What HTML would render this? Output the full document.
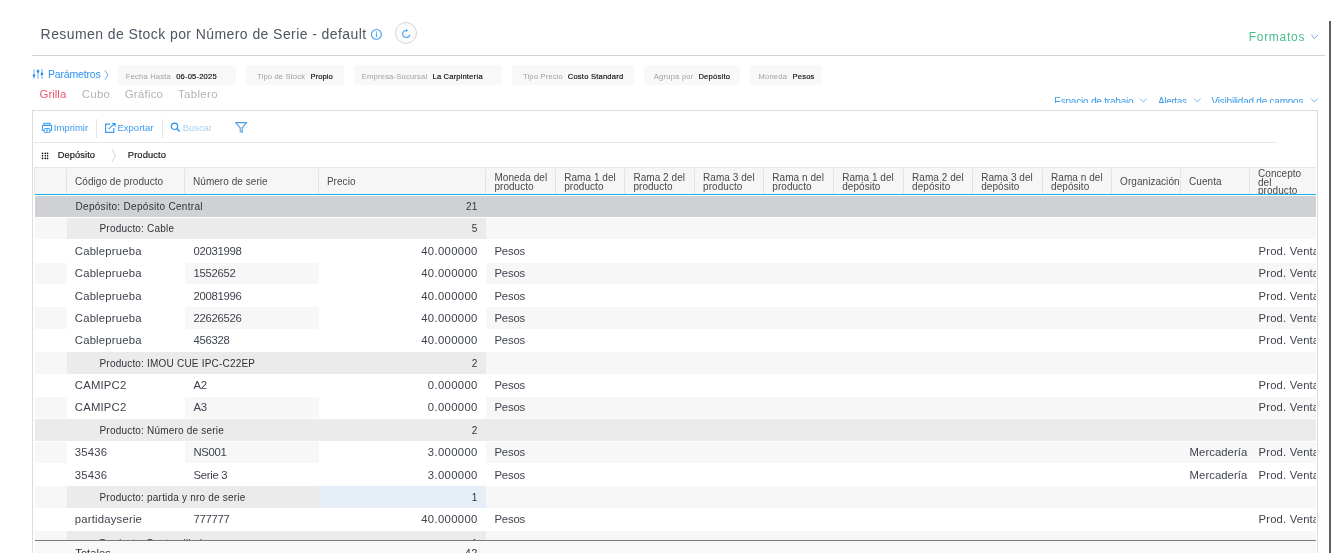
<!DOCTYPE html>
<html><head><meta charset="utf-8"><style>
html,body{margin:0;padding:0;background:#fff;width:1331px;height:553px;overflow:hidden;position:relative}
body{font-family:"Liberation Sans",sans-serif}
.t{position:absolute;white-space:nowrap;line-height:1}
.r{position:absolute;box-sizing:border-box}
svg.r{overflow:visible}
</style></head><body><div id="w" style="position:absolute;left:0;top:0;width:1331px;height:553px;will-change:transform">
<div class="t" style="left:40.60px;top:26.87px;font-size:14px;color:#4f5561;letter-spacing:0.422px;">Resumen de Stock por Número de Serie - default</div>
<svg class="r" style="left:370px;top:28px" width="13" height="13" viewBox="0 0 13 13"><circle cx="6.4" cy="6.4" r="4.9" fill="none" stroke="#3d9ff2" stroke-width="1.1"/><rect x="5.9" y="5.4" width="1.1" height="3.6" fill="#3d9ff2"/><rect x="5.9" y="3.6" width="1.1" height="1.1" fill="#3d9ff2"/></svg>
<div class="r" style="left:395px;top:22px;width:22px;height:22px;border:1px solid #d3d5d8;background:#fbfbfb;border-radius:50%"></div>
<svg class="r" style="left:400px;top:27px" width="13" height="13" viewBox="0 0 13 13"><path d="M6.3 3.5 A3.5 3.5 0 1 0 9.7 7.6" fill="none" stroke="#4aa3f2" stroke-width="1.1"/><path d="M5.9 2.0 L8.1 3.5 L5.9 5.0 Z" fill="#3d9ff2"/></svg>
<div class="t" style="left:1248.70px;top:30.86px;font-size:12px;color:#47bf8f;letter-spacing:0.717px;">Formatos</div>
<svg class="r" style="left:1310px;top:33px" width="10" height="8" viewBox="0 0 10 8"><polyline points="1.3,1.8 4.6,5.6 8,1.8" fill="none" stroke="#7aa6dc" stroke-width="1"/></svg>
<div class="r" style="left:32.00px;top:55.00px;width:1293.00px;height:1.00px;background:#cfd2d6;"></div>
<div class="r" style="left:1329.40px;top:21.00px;width:1.60px;height:532.00px;background:#5d5d5d;"></div>
<svg class="r" style="left:32px;top:68px" width="12" height="12" viewBox="0 0 12 12"><rect x="1.3" y="1" width="1.4" height="10" fill="#9fcbf7"/><rect x="5.3" y="1" width="1.4" height="10" fill="#9fcbf7"/><rect x="9.2" y="1" width="1.4" height="10" fill="#9fcbf7"/><circle cx="2" cy="7.6" r="1.3" fill="#2a8ff0"/><circle cx="6" cy="3.4" r="1.3" fill="#2a8ff0"/><circle cx="9.9" cy="5.9" r="1.3" fill="#2a8ff0"/></svg>
<div class="t" style="left:47.90px;top:68.83px;font-size:10.5px;color:#2f92ef;letter-spacing:-0.163px;">Parámetros</div>
<svg class="r" style="left:103px;top:69px" width="7" height="12" viewBox="0 0 7 12"><polyline points="2,1.5 5,6 2,10.5" fill="none" stroke="#4a9ff0" stroke-width="0.9"/></svg>
<div class="r" style="left:118.40px;top:64.80px;width:117.30px;height:19.80px;background:#f8f8f8;border-radius:3px;"></div>
<div class="t" style="left:125.80px;top:73.08px;font-size:7.6px;color:#a0a0a0;letter-spacing:0.191px;">Fecha Hasta</div>
<div class="t" style="left:176.20px;top:73.08px;font-size:7.6px;color:#0c0c0c;letter-spacing:0.180px;-webkit-text-stroke:0.15px #0c0c0c;">06-05-2025</div>
<div class="r" style="left:245.90px;top:64.80px;width:97.80px;height:19.80px;background:#f8f8f8;border-radius:3px;"></div>
<div class="t" style="left:257.20px;top:73.08px;font-size:7.6px;color:#a0a0a0;letter-spacing:0.134px;">Tipo de Stock</div>
<div class="t" style="left:310.60px;top:73.08px;font-size:7.6px;color:#0c0c0c;letter-spacing:0.046px;-webkit-text-stroke:0.15px #0c0c0c;">Propio</div>
<div class="r" style="left:354.20px;top:64.80px;width:147.70px;height:19.80px;background:#f8f8f8;border-radius:3px;"></div>
<div class="t" style="left:361.80px;top:73.08px;font-size:7.6px;color:#a0a0a0;letter-spacing:0.193px;">Empresa-Sucursal</div>
<div class="t" style="left:432.60px;top:73.08px;font-size:7.6px;color:#0c0c0c;letter-spacing:0.149px;-webkit-text-stroke:0.15px #0c0c0c;">La Carpintería</div>
<div class="r" style="left:512.40px;top:64.80px;width:121.50px;height:19.80px;background:#f8f8f8;border-radius:3px;"></div>
<div class="t" style="left:523.00px;top:73.08px;font-size:7.6px;color:#a0a0a0;letter-spacing:0.154px;">Tipo Precio</div>
<div class="t" style="left:567.70px;top:73.08px;font-size:7.6px;color:#0c0c0c;letter-spacing:0.207px;-webkit-text-stroke:0.15px #0c0c0c;">Costo Standard</div>
<div class="r" style="left:644.30px;top:64.80px;width:95.50px;height:19.80px;background:#f8f8f8;border-radius:3px;"></div>
<div class="t" style="left:653.70px;top:73.08px;font-size:7.6px;color:#a0a0a0;letter-spacing:0.233px;">Agrupa por</div>
<div class="t" style="left:698.40px;top:73.08px;font-size:7.6px;color:#0c0c0c;letter-spacing:0.243px;-webkit-text-stroke:0.15px #0c0c0c;">Depósito</div>
<div class="r" style="left:750.40px;top:64.80px;width:71.40px;height:19.80px;background:#f8f8f8;border-radius:3px;"></div>
<div class="t" style="left:758.60px;top:73.08px;font-size:7.6px;color:#a0a0a0;letter-spacing:0.167px;">Moneda</div>
<div class="t" style="left:792.60px;top:73.08px;font-size:7.6px;color:#0c0c0c;letter-spacing:0.169px;-webkit-text-stroke:0.15px #0c0c0c;">Pesos</div>
<div class="t" style="left:39.50px;top:88.58px;font-size:11.5px;color:#f2576f;letter-spacing:-0.007px;">Grilla</div>
<div class="t" style="left:81.70px;top:88.58px;font-size:11.5px;color:#b3b3b3;letter-spacing:0.269px;">Cubo</div>
<div class="t" style="left:124.70px;top:88.58px;font-size:11.5px;color:#b3b3b3;letter-spacing:0.206px;">Gráfico</div>
<div class="t" style="left:177.90px;top:88.58px;font-size:11.5px;color:#b3b3b3;letter-spacing:0.330px;">Tablero</div>
<div class="r" style="left:1040px;top:90px;width:290px;height:12.5px;overflow:hidden">
<div class="t" style="left:14.20px;top:7.35px;font-size:10px;color:#3d9ceb;letter-spacing:-0.202px">Espacio de trabajo</div>
<svg class="r" style="left:99.00px;top:7.00px" width="9" height="7" viewBox="0 0 9 7"><polyline points="1,1.5 4.3,5 7.6,1.5" fill="none" stroke="#6fb0ea" stroke-width="0.9"/></svg>
<div class="t" style="left:118.00px;top:7.35px;font-size:10px;color:#3d9ceb;letter-spacing:-0.354px">Alertas</div>
<svg class="r" style="left:152.50px;top:7.00px" width="9" height="7" viewBox="0 0 9 7"><polyline points="1,1.5 4.3,5 7.6,1.5" fill="none" stroke="#6fb0ea" stroke-width="0.9"/></svg>
<div class="t" style="left:171.60px;top:7.35px;font-size:10px;color:#3d9ceb;letter-spacing:-0.237px">Visibilidad de campos</div>
<svg class="r" style="left:269.60px;top:7.00px" width="9" height="7" viewBox="0 0 9 7"><polyline points="1,1.5 4.3,5 7.6,1.5" fill="none" stroke="#6fb0ea" stroke-width="0.9"/></svg>
</div>
<div class="r" style="left:32px;top:110px;width:1286px;height:460px;border:1px solid #dcdcdc"></div>
<svg class="r" style="left:41px;top:122px" width="12" height="12" viewBox="0 0 12 12"><rect x="3" y="1.2" width="6" height="2.2" fill="none" stroke="#3a9cf0" stroke-width="1"/><rect x="1.4" y="3.4" width="9.2" height="5.2" rx="0.8" fill="none" stroke="#3a9cf0" stroke-width="1.1"/><rect x="3.2" y="6.6" width="5.6" height="3.8" rx="0.6" fill="#fff" stroke="#3a9cf0" stroke-width="1"/><circle cx="6" cy="8.4" r="0.9" fill="#3a9cf0"/></svg>
<div class="t" style="left:53.80px;top:123.07px;font-size:9.5px;color:#3a9cf0;">Imprimir</div>
<div class="r" style="left:96.20px;top:119.00px;width:1.00px;height:19.40px;background:#e6e6e6;"></div>
<svg class="r" style="left:104px;top:122px" width="13" height="12" viewBox="0 0 13 12"><path d="M6 2.2 H1.6 V10.3 H9.8 V6" fill="none" stroke="#3a9cf0" stroke-width="1.2"/><path d="M4.6 7.2 L10.6 1.6" stroke="#3a9cf0" stroke-width="1.1"/><path d="M7.6 1 H11.6 V5 Z" fill="#3a9cf0"/></svg>
<div class="t" style="left:117.50px;top:123.07px;font-size:9.5px;color:#3a9cf0;">Exportar</div>
<div class="r" style="left:162.20px;top:119.00px;width:1.00px;height:19.40px;background:#e6e6e6;"></div>
<svg class="r" style="left:170px;top:122px" width="11" height="11" viewBox="0 0 11 11"><circle cx="4.5" cy="4.3" r="3.2" fill="none" stroke="#2f92ef" stroke-width="1.2"/><path d="M6.8 6.6 L9.6 9.4" stroke="#2f92ef" stroke-width="1.4"/></svg>
<div class="t" style="left:182.80px;top:123.07px;font-size:9.5px;color:#a6d2f6;letter-spacing:-0.073px;">Buscar</div>
<svg class="r" style="left:234px;top:121px" width="14" height="13" viewBox="0 0 14 13"><path d="M1.6 1.6 H12.6 L8.2 6.6 V11.6 L6.2 10.4 V6.6 Z" fill="none" stroke="#4aa0e8" stroke-width="1.1" stroke-linejoin="round"/></svg>
<div class="r" style="left:34.00px;top:142.00px;width:1243.00px;height:1.00px;background:#e8e8e8;"></div>
<svg class="r" style="left:40px;top:151px" width="10" height="10" viewBox="0 0 10 10"><path d="M2.5 2.35 H7.6 M2.5 7.4 H7.6 M2.5 2.35 V7.4 M5.35 2.35 V7.4 M7.6 2.35 V7.4" stroke="#bbb" stroke-width="0.5"/><circle cx="2.5" cy="2.35" r="0.8" fill="#111"/><circle cx="2.5" cy="4.8" r="0.8" fill="#111"/><circle cx="2.5" cy="7.4" r="0.8" fill="#111"/><circle cx="5.35" cy="2.35" r="0.8" fill="#111"/><circle cx="5.35" cy="4.8" r="0.8" fill="#111"/><circle cx="5.35" cy="7.4" r="0.8" fill="#111"/><circle cx="7.6" cy="2.35" r="0.8" fill="#111"/><circle cx="7.6" cy="4.8" r="0.8" fill="#111"/><circle cx="7.6" cy="7.4" r="0.8" fill="#111"/></svg>
<div class="t" style="left:57.80px;top:150.84px;font-size:9.3px;color:#222;letter-spacing:0.071px;-webkit-text-stroke:0.2px #222;">Depósito</div>
<svg class="r" style="left:110px;top:148px" width="8" height="15" viewBox="0 0 8 15"><polyline points="2.3,1.3 5.3,7.5 2.3,13.7" fill="none" stroke="#d2d2d2" stroke-width="1"/></svg>
<div class="t" style="left:127.80px;top:150.84px;font-size:9.3px;color:#222;letter-spacing:0.140px;-webkit-text-stroke:0.2px #222;">Producto</div>
<div class="r" style="left:34.20px;top:167.00px;width:1281.80px;height:1.00px;background:#e6e6e6;"></div>
<div class="r" style="left:34.20px;top:167.00px;width:1.00px;height:28.00px;background:#e6e6e6;"></div>
<div class="r" style="left:35.00px;top:168.00px;width:1281.00px;height:26.00px;background:#f6f6f6;"></div>
<div class="r" style="left:65.90px;top:168.60px;width:1.00px;height:25.40px;background:#e3e3e3;"></div>
<div class="r" style="left:183.90px;top:168.60px;width:1.00px;height:25.40px;background:#e3e3e3;"></div>
<div class="r" style="left:317.80px;top:168.60px;width:1.00px;height:25.40px;background:#e3e3e3;"></div>
<div class="r" style="left:485.10px;top:168.60px;width:1.00px;height:25.40px;background:#e3e3e3;"></div>
<div class="r" style="left:554.90px;top:168.60px;width:1.00px;height:25.40px;background:#e3e3e3;"></div>
<div class="r" style="left:624.10px;top:168.60px;width:1.00px;height:25.40px;background:#e3e3e3;"></div>
<div class="r" style="left:693.80px;top:168.60px;width:1.00px;height:25.40px;background:#e3e3e3;"></div>
<div class="r" style="left:763.00px;top:168.60px;width:1.00px;height:25.40px;background:#e3e3e3;"></div>
<div class="r" style="left:832.90px;top:168.60px;width:1.00px;height:25.40px;background:#e3e3e3;"></div>
<div class="r" style="left:902.80px;top:168.60px;width:1.00px;height:25.40px;background:#e3e3e3;"></div>
<div class="r" style="left:971.90px;top:168.60px;width:1.00px;height:25.40px;background:#e3e3e3;"></div>
<div class="r" style="left:1041.80px;top:168.60px;width:1.00px;height:25.40px;background:#e3e3e3;"></div>
<div class="r" style="left:1111.00px;top:168.60px;width:1.00px;height:25.40px;background:#e3e3e3;"></div>
<div class="r" style="left:1180.00px;top:168.60px;width:1.00px;height:25.40px;background:#e3e3e3;"></div>
<div class="r" style="left:1249.00px;top:168.60px;width:1.00px;height:25.40px;background:#e3e3e3;"></div>
<div class="r" style="left:35.00px;top:194.00px;width:1281.00px;height:1.30px;background:#19b4ea;"></div>
<div class="t" style="left:75.00px;top:176.65px;font-size:10px;color:#47494c;letter-spacing:0.050px;">Código de producto</div>
<div class="t" style="left:193.00px;top:176.65px;font-size:10px;color:#47494c;letter-spacing:0.050px;">Número de serie</div>
<div class="t" style="left:326.90px;top:176.65px;font-size:10px;color:#47494c;letter-spacing:0.050px;">Precio</div>
<div class="t" style="left:1120.10px;top:176.65px;font-size:10px;color:#47494c;letter-spacing:0.050px;">Organización</div>
<div class="t" style="left:1189.10px;top:176.65px;font-size:10px;color:#47494c;letter-spacing:0.050px;">Cuenta</div>
<div class="t" style="left:494.40px;top:173.15px;font-size:10px;color:#47494c;letter-spacing:0.050px;">Moneda del</div>
<div class="t" style="left:494.40px;top:181.55px;font-size:10px;color:#47494c;letter-spacing:0.050px;">producto</div>
<div class="t" style="left:564.20px;top:173.15px;font-size:10px;color:#47494c;letter-spacing:0.050px;">Rama 1 del</div>
<div class="t" style="left:564.20px;top:181.55px;font-size:10px;color:#47494c;letter-spacing:0.050px;">producto</div>
<div class="t" style="left:633.40px;top:173.15px;font-size:10px;color:#47494c;letter-spacing:0.050px;">Rama 2 del</div>
<div class="t" style="left:633.40px;top:181.55px;font-size:10px;color:#47494c;letter-spacing:0.050px;">producto</div>
<div class="t" style="left:703.10px;top:173.15px;font-size:10px;color:#47494c;letter-spacing:0.050px;">Rama 3 del</div>
<div class="t" style="left:703.10px;top:181.55px;font-size:10px;color:#47494c;letter-spacing:0.050px;">producto</div>
<div class="t" style="left:772.30px;top:173.15px;font-size:10px;color:#47494c;letter-spacing:0.050px;">Rama n del</div>
<div class="t" style="left:772.30px;top:181.55px;font-size:10px;color:#47494c;letter-spacing:0.050px;">producto</div>
<div class="t" style="left:842.20px;top:173.15px;font-size:10px;color:#47494c;letter-spacing:0.050px;">Rama 1 del</div>
<div class="t" style="left:842.20px;top:181.55px;font-size:10px;color:#47494c;letter-spacing:0.050px;">depósito</div>
<div class="t" style="left:912.10px;top:173.15px;font-size:10px;color:#47494c;letter-spacing:0.050px;">Rama 2 del</div>
<div class="t" style="left:912.10px;top:181.55px;font-size:10px;color:#47494c;letter-spacing:0.050px;">depósito</div>
<div class="t" style="left:981.20px;top:173.15px;font-size:10px;color:#47494c;letter-spacing:0.050px;">Rama 3 del</div>
<div class="t" style="left:981.20px;top:181.55px;font-size:10px;color:#47494c;letter-spacing:0.050px;">depósito</div>
<div class="t" style="left:1051.10px;top:173.15px;font-size:10px;color:#47494c;letter-spacing:0.050px;">Rama n del</div>
<div class="t" style="left:1051.10px;top:181.55px;font-size:10px;color:#47494c;letter-spacing:0.050px;">depósito</div>
<div class="r" style="left:1249.5px;top:168px;width:66.50px;height:26px;overflow:hidden">
<div class="t" style="left:8.5px;top:0.95px;font-size:10px;color:#47494c;letter-spacing:0.05px">Concepto</div>
<div class="t" style="left:8.5px;top:9.55px;font-size:10px;color:#47494c;letter-spacing:0.05px">del</div>
<div class="t" style="left:8.5px;top:17.95px;font-size:10px;color:#47494c;letter-spacing:0.05px">producto</div>
</div>
<div class="r" style="left:0;top:195.3px;width:1331px;height:345.10px;overflow:hidden">
<div class="r" style="left:35.00px;top:0.30px;width:1281.00px;height:21.37px;background:#cfd1d5"></div>
<div class="t" style="left:75.50px;top:7.10px;font-size:10px;color:#2f3238;letter-spacing:0.300px">Depósito: Depósito Central</div>
<div class="t" style="left:465.98px;top:7.10px;font-size:10px;color:#2f3238;letter-spacing:0.300px">21</div>
<div class="r" style="left:35.00px;top:22.67px;width:32.10px;height:21.37px;background:#f7f7f7"></div>
<div class="r" style="left:67.10px;top:22.67px;width:419.00px;height:21.37px;background:#ebebeb"></div>
<div class="r" style="left:486.10px;top:22.67px;width:829.90px;height:21.37px;background:#f7f7f7"></div>
<div class="t" style="left:99.50px;top:29.07px;font-size:10px;color:#2f3238;letter-spacing:0.200px">Producto: Cable</div>
<div class="t" style="left:471.84px;top:29.07px;font-size:10px;color:#2f3238;letter-spacing:0.000px">5</div>
<div class="t" style="left:74.80px;top:50.54px;font-size:11.3px;color:#3e434d;letter-spacing:0.200px">Cableprueba</div>
<div class="t" style="left:193.50px;top:50.54px;font-size:11.3px;color:#3e434d;letter-spacing:-0.300px">02031998</div>
<div class="t" style="left:421.18px;top:50.54px;font-size:11.3px;color:#3e434d;letter-spacing:0.350px">40.000000</div>
<div class="t" style="left:494.40px;top:50.54px;font-size:11.3px;color:#3e434d;letter-spacing:-0.150px">Pesos</div>
<div class="r" style="left:1249.50px;top:45.04px;width:66.50px;height:22.37px;overflow:hidden"><div class="t" style="left:9.10px;top:5.50px;font-size:11.3px;color:#3e434d;letter-spacing:0.15px">Prod. Venta</div></div>
<div class="r" style="left:35.00px;top:67.41px;width:32.10px;height:21.37px;background:#f7f7f7"></div>
<div class="r" style="left:185.00px;top:67.41px;width:133.90px;height:21.37px;background:#f7f7f7"></div>
<div class="r" style="left:486.10px;top:67.41px;width:829.90px;height:21.37px;background:#f7f7f7"></div>
<div class="t" style="left:74.80px;top:72.91px;font-size:11.3px;color:#3e434d;letter-spacing:0.200px">Cableprueba</div>
<div class="t" style="left:193.50px;top:72.91px;font-size:11.3px;color:#3e434d;letter-spacing:-0.300px">1552652</div>
<div class="t" style="left:421.18px;top:72.91px;font-size:11.3px;color:#3e434d;letter-spacing:0.350px">40.000000</div>
<div class="t" style="left:494.40px;top:72.91px;font-size:11.3px;color:#3e434d;letter-spacing:-0.150px">Pesos</div>
<div class="r" style="left:1249.50px;top:67.41px;width:66.50px;height:22.37px;overflow:hidden"><div class="t" style="left:9.10px;top:5.50px;font-size:11.3px;color:#3e434d;letter-spacing:0.15px">Prod. Venta</div></div>
<div class="t" style="left:74.80px;top:95.28px;font-size:11.3px;color:#3e434d;letter-spacing:0.200px">Cableprueba</div>
<div class="t" style="left:193.50px;top:95.28px;font-size:11.3px;color:#3e434d;letter-spacing:-0.300px">20081996</div>
<div class="t" style="left:421.18px;top:95.28px;font-size:11.3px;color:#3e434d;letter-spacing:0.350px">40.000000</div>
<div class="t" style="left:494.40px;top:95.28px;font-size:11.3px;color:#3e434d;letter-spacing:-0.150px">Pesos</div>
<div class="r" style="left:1249.50px;top:89.78px;width:66.50px;height:22.37px;overflow:hidden"><div class="t" style="left:9.10px;top:5.50px;font-size:11.3px;color:#3e434d;letter-spacing:0.15px">Prod. Venta</div></div>
<div class="r" style="left:35.00px;top:112.15px;width:32.10px;height:21.37px;background:#f7f7f7"></div>
<div class="r" style="left:185.00px;top:112.15px;width:133.90px;height:21.37px;background:#f7f7f7"></div>
<div class="r" style="left:486.10px;top:112.15px;width:829.90px;height:21.37px;background:#f7f7f7"></div>
<div class="t" style="left:74.80px;top:117.65px;font-size:11.3px;color:#3e434d;letter-spacing:0.200px">Cableprueba</div>
<div class="t" style="left:193.50px;top:117.65px;font-size:11.3px;color:#3e434d;letter-spacing:-0.300px">22626526</div>
<div class="t" style="left:421.18px;top:117.65px;font-size:11.3px;color:#3e434d;letter-spacing:0.350px">40.000000</div>
<div class="t" style="left:494.40px;top:117.65px;font-size:11.3px;color:#3e434d;letter-spacing:-0.150px">Pesos</div>
<div class="r" style="left:1249.50px;top:112.15px;width:66.50px;height:22.37px;overflow:hidden"><div class="t" style="left:9.10px;top:5.50px;font-size:11.3px;color:#3e434d;letter-spacing:0.15px">Prod. Venta</div></div>
<div class="t" style="left:74.80px;top:140.02px;font-size:11.3px;color:#3e434d;letter-spacing:0.200px">Cableprueba</div>
<div class="t" style="left:193.50px;top:140.02px;font-size:11.3px;color:#3e434d;letter-spacing:-0.300px">456328</div>
<div class="t" style="left:421.18px;top:140.02px;font-size:11.3px;color:#3e434d;letter-spacing:0.350px">40.000000</div>
<div class="t" style="left:494.40px;top:140.02px;font-size:11.3px;color:#3e434d;letter-spacing:-0.150px">Pesos</div>
<div class="r" style="left:1249.50px;top:134.52px;width:66.50px;height:22.37px;overflow:hidden"><div class="t" style="left:9.10px;top:5.50px;font-size:11.3px;color:#3e434d;letter-spacing:0.15px">Prod. Venta</div></div>
<div class="r" style="left:35.00px;top:156.89px;width:32.10px;height:21.37px;background:#f7f7f7"></div>
<div class="r" style="left:67.10px;top:156.89px;width:419.00px;height:21.37px;background:#ebebeb"></div>
<div class="r" style="left:486.10px;top:156.89px;width:829.90px;height:21.37px;background:#f7f7f7"></div>
<div class="t" style="left:99.50px;top:163.29px;font-size:10px;color:#2f3238;letter-spacing:0.200px">Producto: IMOU CUE IPC-C22EP</div>
<div class="t" style="left:471.84px;top:163.29px;font-size:10px;color:#2f3238;letter-spacing:0.000px">2</div>
<div class="t" style="left:74.80px;top:184.76px;font-size:11.3px;color:#3e434d;letter-spacing:0.200px">CAMIPC2</div>
<div class="t" style="left:193.50px;top:184.76px;font-size:11.3px;color:#3e434d;letter-spacing:-0.300px">A2</div>
<div class="t" style="left:427.82px;top:184.76px;font-size:11.3px;color:#3e434d;letter-spacing:0.350px">0.000000</div>
<div class="t" style="left:494.40px;top:184.76px;font-size:11.3px;color:#3e434d;letter-spacing:-0.150px">Pesos</div>
<div class="r" style="left:1249.50px;top:179.26px;width:66.50px;height:22.37px;overflow:hidden"><div class="t" style="left:9.10px;top:5.50px;font-size:11.3px;color:#3e434d;letter-spacing:0.15px">Prod. Venta</div></div>
<div class="r" style="left:35.00px;top:201.63px;width:32.10px;height:21.37px;background:#f7f7f7"></div>
<div class="r" style="left:185.00px;top:201.63px;width:133.90px;height:21.37px;background:#f7f7f7"></div>
<div class="r" style="left:486.10px;top:201.63px;width:829.90px;height:21.37px;background:#f7f7f7"></div>
<div class="t" style="left:74.80px;top:207.13px;font-size:11.3px;color:#3e434d;letter-spacing:0.200px">CAMIPC2</div>
<div class="t" style="left:193.50px;top:207.13px;font-size:11.3px;color:#3e434d;letter-spacing:-0.300px">A3</div>
<div class="t" style="left:427.82px;top:207.13px;font-size:11.3px;color:#3e434d;letter-spacing:0.350px">0.000000</div>
<div class="t" style="left:494.40px;top:207.13px;font-size:11.3px;color:#3e434d;letter-spacing:-0.150px">Pesos</div>
<div class="r" style="left:1249.50px;top:201.63px;width:66.50px;height:22.37px;overflow:hidden"><div class="t" style="left:9.10px;top:5.50px;font-size:11.3px;color:#3e434d;letter-spacing:0.15px">Prod. Venta</div></div>
<div class="r" style="left:35.00px;top:224.00px;width:1281.00px;height:21.37px;background:#ebebeb"></div>
<div class="t" style="left:99.50px;top:230.40px;font-size:10px;color:#2f3238;letter-spacing:0.200px">Producto: Número de serie</div>
<div class="t" style="left:471.84px;top:230.40px;font-size:10px;color:#2f3238;letter-spacing:0.000px">2</div>
<div class="r" style="left:35.00px;top:246.37px;width:32.10px;height:21.37px;background:#f7f7f7"></div>
<div class="r" style="left:185.00px;top:246.37px;width:133.90px;height:21.37px;background:#f7f7f7"></div>
<div class="r" style="left:486.10px;top:246.37px;width:829.90px;height:21.37px;background:#f7f7f7"></div>
<div class="t" style="left:74.80px;top:251.87px;font-size:11.3px;color:#3e434d;letter-spacing:0.200px">35436</div>
<div class="t" style="left:193.50px;top:251.87px;font-size:11.3px;color:#3e434d;letter-spacing:-0.300px">NS001</div>
<div class="t" style="left:427.82px;top:251.87px;font-size:11.3px;color:#3e434d;letter-spacing:0.350px">3.000000</div>
<div class="t" style="left:494.40px;top:251.87px;font-size:11.3px;color:#3e434d;letter-spacing:-0.150px">Pesos</div>
<div class="t" style="left:1189.60px;top:251.87px;font-size:11.3px;color:#3e434d;letter-spacing:0.050px">Mercadería</div>
<div class="r" style="left:1249.50px;top:246.37px;width:66.50px;height:22.37px;overflow:hidden"><div class="t" style="left:9.10px;top:5.50px;font-size:11.3px;color:#3e434d;letter-spacing:0.15px">Prod. Venta</div></div>
<div class="t" style="left:74.80px;top:274.24px;font-size:11.3px;color:#3e434d;letter-spacing:0.200px">35436</div>
<div class="t" style="left:193.50px;top:274.24px;font-size:11.3px;color:#3e434d;letter-spacing:-0.300px">Serie 3</div>
<div class="t" style="left:427.82px;top:274.24px;font-size:11.3px;color:#3e434d;letter-spacing:0.350px">3.000000</div>
<div class="t" style="left:494.40px;top:274.24px;font-size:11.3px;color:#3e434d;letter-spacing:-0.150px">Pesos</div>
<div class="t" style="left:1189.60px;top:274.24px;font-size:11.3px;color:#3e434d;letter-spacing:0.050px">Mercadería</div>
<div class="r" style="left:1249.50px;top:268.74px;width:66.50px;height:22.37px;overflow:hidden"><div class="t" style="left:9.10px;top:5.50px;font-size:11.3px;color:#3e434d;letter-spacing:0.15px">Prod. Venta</div></div>
<div class="r" style="left:35.00px;top:291.11px;width:32.10px;height:21.37px;background:#f7f7f7"></div>
<div class="r" style="left:67.10px;top:291.11px;width:419.00px;height:21.37px;background:#ebebeb"></div>
<div class="r" style="left:486.10px;top:291.11px;width:829.90px;height:21.37px;background:#f7f7f7"></div>
<div class="r" style="left:318.90px;top:291.11px;width:167.20px;height:21.37px;background:#e6eef8"></div>
<div class="t" style="left:99.50px;top:297.51px;font-size:10px;color:#2f3238;letter-spacing:0.200px">Producto: partida y nro de serie</div>
<div class="t" style="left:471.84px;top:297.51px;font-size:10px;color:#2f3238;letter-spacing:0.000px">1</div>
<div class="t" style="left:74.80px;top:318.98px;font-size:11.3px;color:#3e434d;letter-spacing:0.200px">partidayserie</div>
<div class="t" style="left:193.50px;top:318.98px;font-size:11.3px;color:#3e434d;letter-spacing:-0.300px">777777</div>
<div class="t" style="left:421.18px;top:318.98px;font-size:11.3px;color:#3e434d;letter-spacing:0.350px">40.000000</div>
<div class="t" style="left:494.40px;top:318.98px;font-size:11.3px;color:#3e434d;letter-spacing:-0.150px">Pesos</div>
<div class="r" style="left:1249.50px;top:313.48px;width:66.50px;height:22.37px;overflow:hidden"><div class="t" style="left:9.10px;top:5.50px;font-size:11.3px;color:#3e434d;letter-spacing:0.15px">Prod. Venta</div></div>
<div class="r" style="left:35.00px;top:335.85px;width:32.10px;height:21.37px;background:#f7f7f7"></div>
<div class="r" style="left:67.10px;top:335.85px;width:419.00px;height:21.37px;background:#ebebeb"></div>
<div class="r" style="left:486.10px;top:335.85px;width:829.90px;height:21.37px;background:#f7f7f7"></div>
<div class="t" style="left:99.50px;top:343.25px;font-size:10px;color:#2f3238;letter-spacing:0.200px">Producto: Destornillador</div>
<div class="t" style="left:471.84px;top:343.25px;font-size:10px;color:#2f3238;letter-spacing:0.000px">1</div>
</div>
<div class="r" style="left:35.00px;top:540.00px;width:1281.00px;height:1.00px;background:#7b7b7b;"></div>
<div class="r" style="left:35.00px;top:541.00px;width:1281.00px;height:12.00px;background:#f8f8f8;"></div>
<div class="t" style="left:75.30px;top:547.71px;font-size:11px;color:#333;letter-spacing:0.100px;">Totales</div>
<div class="t" style="left:464.86px;top:547.71px;font-size:11px;color:#333;letter-spacing:0.300px;">42</div>
</div></body></html>
